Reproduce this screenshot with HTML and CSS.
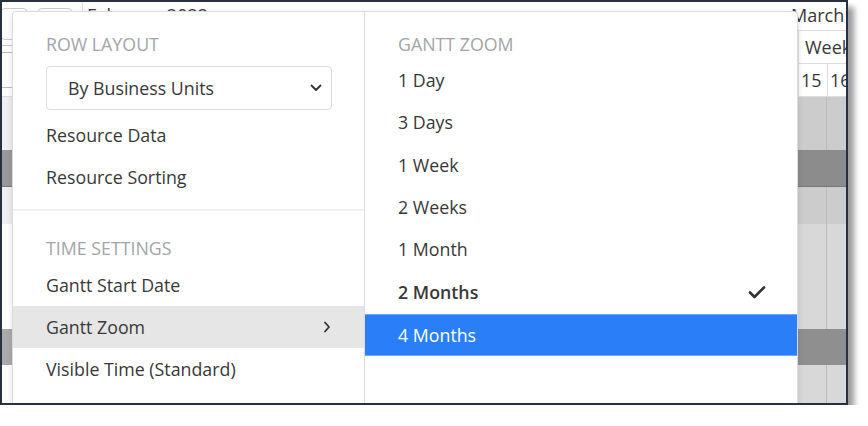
FILE: index.html
```html
<!DOCTYPE html>
<html lang="en">
  <head>
    <meta charset="UTF-8" />
    <title>gantt settings</title>
    <link rel="stylesheet" href="styles.css">
  </head>
  <body>
    <div class="frame">
      <div class="app">
        <div class="head">
          <div class="res-head">
            <div class="tools">
              <span class="tool tool-a"></span>
              <span class="tool tool-b"></span>
            </div>
            <div class="search"></div>
          </div>
          <div class="time-head">
            <div class="months">
              <div class="month feb">February 2022</div>
              <div class="month">March</div>
            </div>
            <div class="weeks">
              <div class="filler"></div>
              <div class="week">Week</div>
            </div>
            <div class="days">
              <div class="filler"></div>
              <div class="day">15</div>
              <div class="day">16</div>
            </div>
          </div>
        </div>

        <div class="row r1"><div class="res"></div><div class="filler"></div><div class="day"></div><div class="day"></div></div>
        <div class="row r2"><div class="res"></div><div class="filler"></div><div class="day"></div><div class="day"></div></div>
        <div class="row r3"><div class="res"></div><div class="filler"></div><div class="day"></div><div class="day"></div></div>
        <div class="row r4"><div class="res"></div><div class="filler"></div><div class="day"></div><div class="day"></div></div>
        <div class="row r5"><div class="res"></div><div class="filler"></div><div class="day"></div><div class="day"></div></div>
        <div class="row r6"><div class="res"></div><div class="filler"></div><div class="day"></div><div class="day"></div></div>

        <!-- settings dropdown -->
        <div class="menu">
          <div class="col left">
            <div class="section">
              <div class="heading">Row Layout</div>
              <div class="select">
                <span>By Business Units</span>
                <svg width="12" height="8" viewBox="0 0 12 8"><path d="M1.5 1.5 6 6l4.5-4.5" fill="none" stroke="#333" stroke-width="1.8" stroke-linecap="round" stroke-linejoin="round"/></svg>
              </div>
              <div class="item">Resource Data</div>
              <div class="item">Resource Sorting</div>
            </div>
            <div class="section second">
              <div class="heading">Time Settings</div>
              <div class="item">Gantt Start Date</div>
              <div class="item hover">
                <span>Gantt Zoom</span>
                <svg width="8" height="12" viewBox="0 0 8 12"><path d="M2 1.5 6 6l-4 4.5" fill="none" stroke="#333" stroke-width="1.8" stroke-linecap="round" stroke-linejoin="round"/></svg>
              </div>
              <div class="item">Visible Time (Standard)</div>
            </div>
          </div>
          <div class="col right">
            <div class="heading">Gantt Zoom</div>
            <div class="item">1 Day</div>
            <div class="item">3 Days</div>
            <div class="item">1 Week</div>
            <div class="item">2 Weeks</div>
            <div class="item">1 Month</div>
            <div class="item checked">
              <span>2 Months</span>
              <svg width="18" height="14" viewBox="0 0 18 14"><path d="M2 7.5 6.5 12 16 2.5" fill="none" stroke="#333" stroke-width="2.6" stroke-linecap="round" stroke-linejoin="round"/></svg>
            </div>
            <div class="item active">4 Months</div>
          </div>
        </div>
      </div>
    </div>
  </body>
</html>
```

FILE: styles.css
```css
body {
  margin: 0;
  background: #fff;
  font-family: "Open Sans", "Noto Sans", sans-serif;
  font-size: 17.8px;
  color: #383838;
}
.frame {
  width: 844px;
  height: 401px;
  border: 2px solid #263042;
  box-shadow: 6px 7px 6px rgba(0, 0, 0, 0.4);
}
.app {
  position: relative;
  height: 100%;
  overflow: hidden;
  background: #fff;
}

/* background gantt */
.head {
  display: flex;
  height: 95px;
  border-bottom: 1px solid #ddd;
  box-sizing: border-box;
}
.res-head {
  width: 80px;
  flex: none;
  border-right: 1px solid #ddd;
}
.tools {
  display: flex;
  gap: 9px;
  padding-top: 6px;
  height: 37px;
  border-bottom: 1px solid #ccc;
}
.tool {
  display: block;
  height: 30px;
  border: 1px solid #ccc;
  border-radius: 5px;
}
.tool-a {
  width: 26px;
  margin-left: -2px;
}
.tool-b {
  width: 34px;
}
.search {
  margin: 6px 0 0 -4px;
  width: 60px;
  height: 34px;
  border: 1px solid #bbb;
  border-radius: 5px;
}
.time-head {
  flex: 1;
  display: flex;
  flex-direction: column;
  overflow: hidden;
}
.months, .weeks, .days {
  display: flex;
  white-space: nowrap;
}
.months {
  height: 30px;
  border-bottom: 1px solid #ddd;
}
.month {
  line-height: 26px;
  font-size: 18px;
}
.feb {
  width: 704px;
  flex: none;
  padding-left: 4px;
}
.weeks {
  height: 32px;
  border-bottom: 1px solid #ddd;
}
.week {
  border-left: 1px solid #ddd;
  padding-left: 6px;
  line-height: 32px;
  font-size: 18px;
}
.days {
  flex: 1;
}
.days .day {
  line-height: 32px;
  font-size: 18px;
  padding-left: 2px;
  box-sizing: border-box;
}
.filler {
  width: 715px;
  flex: none;
}
.day {
  width: 29px;
  flex: none;
  border-left: 1px solid #ddd;
  box-sizing: border-box;
}
.row {
  display: flex;
  overflow: hidden;
}
.row .res {
  width: 80px;
  flex: none;
}
.row .filler {
  width: 715px;
}
.row .day {
  border-left-color: #bbb;
}
.r1 { height: 53px; }
.r2 { height: 36px; border-bottom: 1px solid #777; }
.r3 { height: 37px; }
.r4 { height: 105px; }
.r5 { height: 36px; }
.r6 { height: 60px; }
.r1 .res, .r3 .res { background: #efefef; }
.r2 .res { background: #999; }
.r5 .res { background: #aaa; }
.r1 .day, .r3 .day { background: #ccc; }
.r2 .day { background: #8c8c8c; border-left: 0; }
.r4 .day, .r6 .day { background: #d8d8d8; }
.r5 .day { background: #8f8f8f; border-left: 0; }

/* dropdown */
.menu {
  position: absolute;
  left: 10px;
  top: 9px;
  width: 784px;
  height: 420px;
  display: flex;
  background: #fff;
  border: 1px solid #dcdcdc;
  border-radius: 4px;
  box-shadow: 0 2px 6px rgba(0, 0, 0, 0.12);
}
.col {
  display: flex;
  flex-direction: column;
}
.left {
  width: 351px;
  border-right: 1px solid #ddd;
}
.right {
  flex: 1;
  padding-top: 16px;
}
.section {
  padding: 16px 0 11px;
}
.second {
  border-top: 2px solid #f0f0f0;
  padding-top: 21px;
}
.heading {
  height: 32px;
  line-height: 32px;
  padding-left: 33px;
  color: #a2a5a9;
  text-transform: uppercase;
}
.right .heading {
  margin-bottom: -1px;
}
.select {
  display: flex;
  align-items: center;
  justify-content: space-between;
  margin: 6px 32px 4px 33px;
  height: 44px;
  padding: 0 9px 0 21px;
  border: 1px solid #dcdcdc;
  border-radius: 4px;
  box-sizing: border-box;
}
.item {
  display: flex;
  align-items: center;
  justify-content: space-between;
  height: 42px;
  padding: 0 33px;
  box-sizing: border-box;
}
.right .item {
  height: 42.3px;
}
.hover {
  background: #e6e6e6;
}
.checked {
  font-weight: 600;
  padding-right: 31px;
}
.right .active {
  background: #2a7ff9;
  color: #fff;
  border-top: 1px solid #6aa9ff;
  border-bottom: 1px solid #6aa9ff;
  margin-top: 1px;
}
```
